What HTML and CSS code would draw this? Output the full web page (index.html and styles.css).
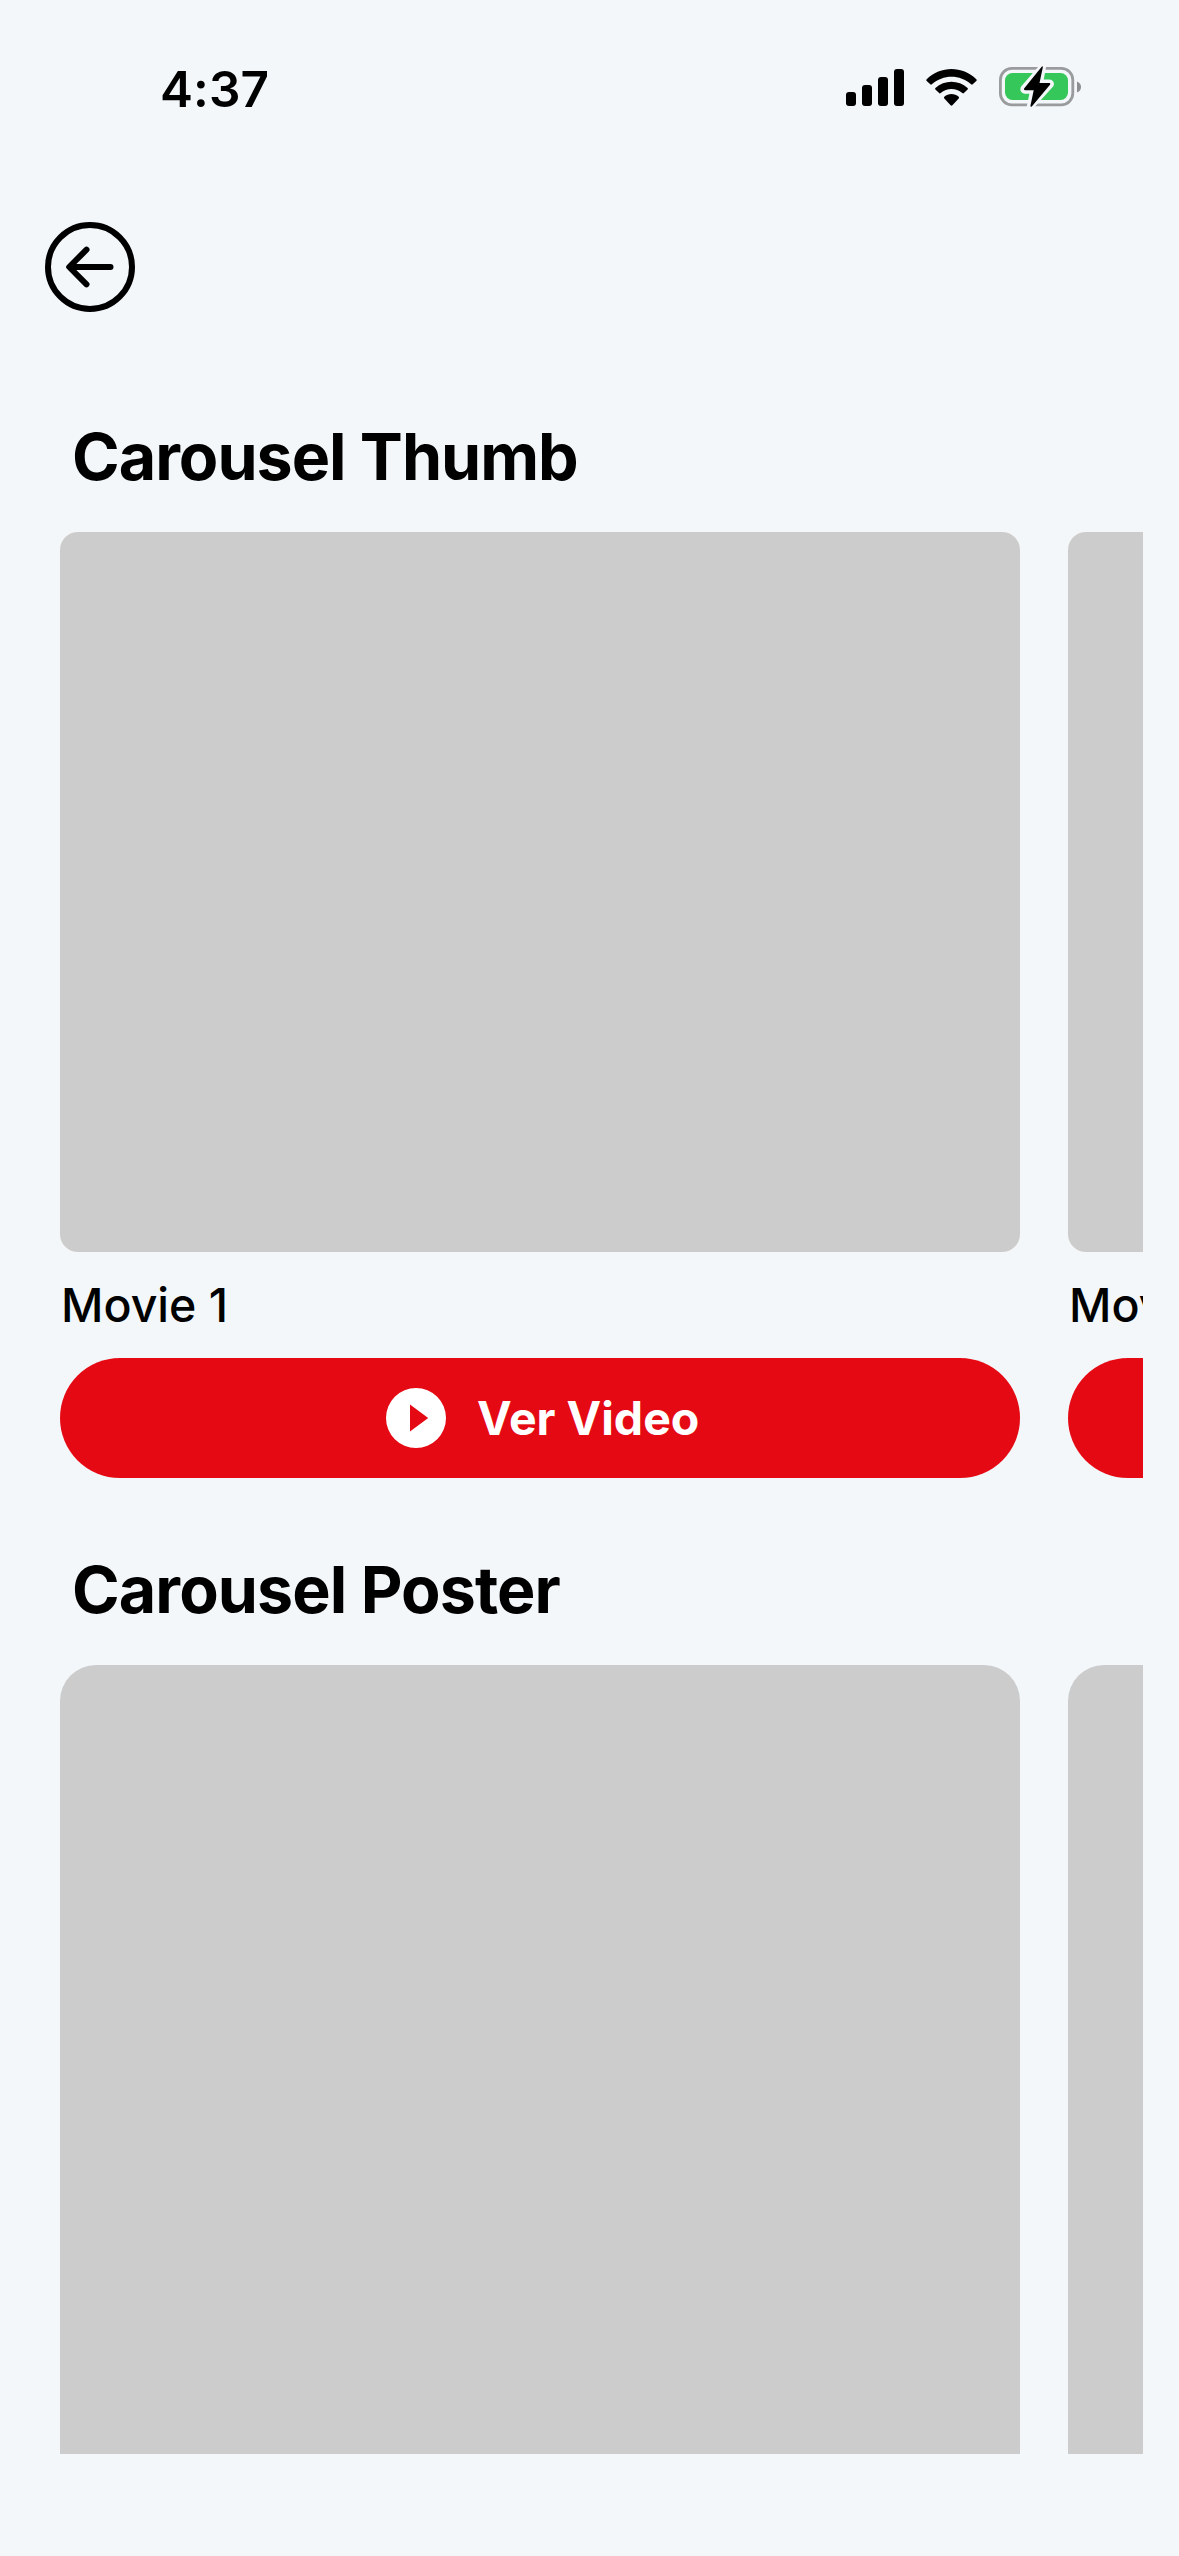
FILE: index.html
```html
<!DOCTYPE html>
<html lang="es">
<head>
<meta charset="utf-8">
<title>Carousel</title>
<link rel="stylesheet" href="styles.css">
</head>
<body>
<div class="screen">
  <header class="status">
    <span class="time">4:37</span>
    <div class="indicators">
      <svg class="signal" width="58" height="40" viewBox="0 0 58 40">
        <rect x="0" y="24" width="10" height="14" rx="3"/>
        <rect x="16" y="17" width="10" height="21" rx="3"/>
        <rect x="32" y="9" width="10" height="29" rx="3"/>
        <rect x="48" y="1" width="10" height="37" rx="3"/>
      </svg>
      <svg class="wifi" width="52" height="40" viewBox="0 0 52 40">
        <path d="M.7 11.2Q-.2 12 .7 12.9L4.3 16.3Q5 17 5.9 16.2C17 6.2 34 6.2 45.100 16.200Q46 17 46.700 16.300L50.300 12.900Q51.200 12 50.300 11.200C36.400-2.300 14.600-2.300.7 11.200Z"/>
        <path d="M9.400 20.100Q8.700 20.900 9.400 21.600L13.100 25.100Q13.800 25.800 14.700 25C21 19.500 30 19.500 36.300 25Q37.200 25.800 37.900 25.100L41.600 21.600Q42.300 20.900 41.600 20.100C32.600 11.600 18.400 11.600 9.400 20.100Z"/>
        <path d="M18.300 28.700Q17.500 29.600 18.300 30.400L24.600 37.200Q25.500 38.100 26.400 37.200L32.700 30.400Q33.500 29.600 32.700 28.700C28.600 25.100 22.400 25.100 18.300 28.700Z"/>
      </svg>
      <svg class="battery" width="83" height="42" viewBox="0 0 83 42">
        <rect class="shell" x="1.400" y="2.400" width="72.400" height="36.400" rx="11.500"/>
        <path class="nub" d="M78 15.500Q82 17 82 21Q82 25 78 26.500Z"/>
        <rect class="charge" x="6" y="7" width="63" height="27" rx="7.500"/>
        <path class="bolt-gap" d="M43.500 1.200 25 22.500Q24.500 24 26 24.200H34.700L31.300 40.500 51.300 18.500Q51.800 17 50.300 17H40.500Z"/>
        <path class="bolt" d="M42.500.9Q44-.4 43.800 1.500L40.500 17H50.300Q51.800 17.200 51 18.700L33 40.200Q31.300 41.500 31.500 39.500L34.700 24.200H26Q24.300 24 25.300 22.300Z"/>
      </svg>
    </div>
  </header>
  <nav class="toolbar">
    <svg class="back" width="90" height="90" viewBox="0 0 90 90">
      <circle cx="45" cy="45" r="42"/>
      <path d="M65.500 45H24.500M41.500 27.700 24.200 45 41.500 62.300"/>
    </svg>
  </nav>
  <main class="content">
    <section class="section">
      <h2 class="title title-thumb">Carousel Thumb</h2>
      <div class="carousel">
        <article class="card">
          <div class="thumb"></div>
          <p class="name">Movie 1</p>
          <div class="watch">
            <svg width="60" height="60" viewBox="0 0 60 60"><path d="M30 0A30 30 0 1 0 30 60A30 30 0 1 0 30 0ZM24 16.500V43.500L42.200 30Z"/></svg>
            <span class="label">Ver Video</span>
          </div>
        </article>
        <article class="card">
          <div class="thumb"></div>
          <p class="name">Movie 2</p>
          <div class="watch"></div>
        </article>
      </div>
    </section>
    <section class="section">
      <h2 class="title title-poster">Carousel Poster</h2>
      <div class="carousel">
        <article class="card"><div class="poster"></div></article>
        <article class="card"><div class="poster"></div></article>
      </div>
    </section>
  </main>
</div>
</body>
</html>
```
FILE: styles.css
```css
* { box-sizing: border-box; }
body { margin: 0; background: #f3f7fa; color: #000; font-family: Inter, "Liberation Sans", sans-serif; }
svg { display: block; flex: none; }
.screen { height: 2556px; overflow: hidden; display: flex; flex-direction: column; }
.status { height: 177px; padding: 58px 97px 0 160px; display: flex; justify-content: space-between; align-items: flex-start; }
.time { padding-top: 1px; font-size: 49.500px; line-height: 60px; font-weight: 600; letter-spacing: 0.1px; }
.indicators { display: flex; padding-top: 10px; }
.wifi { margin-left: 22px; }
.battery { margin: -2px 0 0 21px; }
.shell { fill: none; stroke: #999b9d; stroke-width: 2.8; }
.nub { fill: #8c8e90; }
.charge { fill: #35c759; }
.bolt-gap { fill: #f3f7fa; stroke: #f3f7fa; stroke-width: 7; stroke-linejoin: round; }
.toolbar { height: 222px; padding: 45px 45px 0; }
.back { fill: none; stroke: #000; stroke-width: 6; stroke-linecap: round; stroke-linejoin: round; }
.content { width: 1143px; height: 2055px; padding-left: 60px; overflow: hidden; }
.section { display: flex; flex-direction: column; }
.title { margin: 0; padding: 19px 0 0 12px; height: 133px; font-size: 64.5px; line-height: 78px; font-weight: 700; white-space: nowrap; }
.title-thumb { letter-spacing: -1px; }
.title-poster { letter-spacing: -0.9px; }
.carousel { display: flex; gap: 48px; overflow: hidden; }
.section + .section { padding-top: 54px; }
.card { width: 960px; flex: none; }
.thumb { height: 720px; border-radius: 18px; background: #ccc; }
.poster { height: 1440px; border-radius: 36px; background: #ccc; }
.name { margin: 0; padding: 24px 0 0 1px; height: 106px; font-size: 46.500px; line-height: 58px; font-weight: 550; }
.watch { height: 120px; border-radius: 60px; background: #e50914; color: #fff; display: flex; align-items: center; padding-left: 326px; gap: 31px; }
.watch svg { fill: #fff; fill-rule: evenodd; }
.label { margin-top: -1px; font-size: 46.500px; line-height: 58px; font-weight: 700; white-space: nowrap; }
```
